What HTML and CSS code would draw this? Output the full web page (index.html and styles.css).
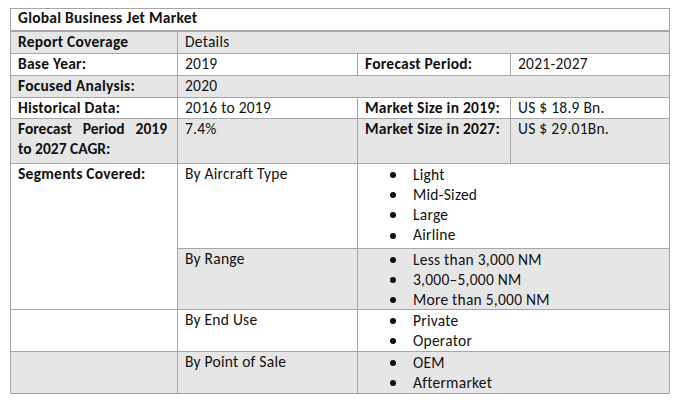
FILE: index.html
```html
<!DOCTYPE html>
<html lang="en">
<head>
<meta charset="utf-8">
<title>Global Business Jet Market</title>
<link rel="stylesheet" href="styles.css">
</head>
<body>
<div class="sheet">
  <div class="c title">Global Business Jet Market</div>

  <div class="c sh b">Report Coverage</div>
  <div class="c sh span3">Details</div>

  <div class="c b">Base Year:</div>
  <div class="c">2019</div>
  <div class="c b">Forecast Period:</div>
  <div class="c">2021-2027</div>

  <div class="c sh b">Focused Analysis:</div>
  <div class="c sh span3">2020</div>

  <div class="c b">Historical Data:</div>
  <div class="c">2016 to 2019</div>
  <div class="c b">Market Size in 2019:</div>
  <div class="c">US $ 18.9 Bn.</div>

  <div class="c sh b just"><span class="jline">Forecast Period 2019</span>to 2027 CAGR:</div>
  <div class="c sh">7.4%</div>
  <div class="c sh b">Market Size in 2027:</div>
  <div class="c sh">US $ 29.01Bn.</div>

  <div class="c b rows2">Segments Covered:</div>
  <div class="c">By Aircraft Type</div>
  <div class="c list span2">
    <ul>
      <li>Light</li>
      <li>Mid-Sized</li>
      <li>Large</li>
      <li>Airline</li>
    </ul>
  </div>

  <div class="c sh">By Range</div>
  <div class="c sh list span2">
    <ul>
      <li>Less than 3,000 NM</li>
      <li>3,000–5,000 NM</li>
      <li>More than 5,000 NM</li>
    </ul>
  </div>

  <div class="c"></div>
  <div class="c">By End Use</div>
  <div class="c list span2">
    <ul>
      <li>Private</li>
      <li>Operator</li>
    </ul>
  </div>

  <div class="c sh"></div>
  <div class="c sh">By Point of Sale</div>
  <div class="c sh list span2">
    <ul>
      <li>OEM</li>
      <li>Aftermarket</li>
    </ul>
  </div>
</div>
</body>
</html>
```

FILE: styles.css
```css
html, body {
  background: #ffffff;
}

body {
  margin: 8px 0 0 10px;
  font-family: Carlito, Calibri, Lato, "Liberation Sans", sans-serif;
  font-size: 15.5px;
  letter-spacing: 0.25px;
  color: #111111;
}

.sheet {
  display: grid;
  width: 660px;
  box-sizing: border-box;
  grid-template-columns: 166px 179px 152px 158px;
  grid-template-rows: 22px 21px 21px 21px 20px 44px 84px 60px 41px 41px;
  gap: 1px;
  background: #a6a6a6;
  border: 1px solid #a6a6a6;
}

.c {
  background: #ffffff;
  padding: 0 7px;
  line-height: 20.3px;
  box-sizing: border-box;
  overflow: hidden;
  white-space: nowrap;
}

.sh {
  background: #e7e6e6;
}

.b {
  font-weight: 700;
}

.title {
  grid-column: 1 / -1;
  font-weight: 700;
  padding-top: 0;
  line-height: 17px;
  border-bottom: 1px solid #a6a6a6;
}

.span3 {
  grid-column: span 3;
}

.span2 {
  grid-column: span 2;
}

.rows2 {
  grid-row: span 2;
}

.just {
  padding-right: 10px;
  white-space: normal;
  letter-spacing: 0;
}

.jline {
  display: block;
  text-align: justify;
  text-align-last: justify;
}

.list {
  padding: 0.5px 0 0;
}

.list ul {
  margin: 0;
  padding: 0;
  list-style: none;
}

.list li {
  display: flex;
  align-items: center;
  line-height: 20.3px;
}

.list li::before {
  content: "";
  flex: 0 0 6px;
  width: 6px;
  height: 6px;
  border-radius: 50%;
  background: #111111;
  margin: 0 17px 0 32px;
}
```
